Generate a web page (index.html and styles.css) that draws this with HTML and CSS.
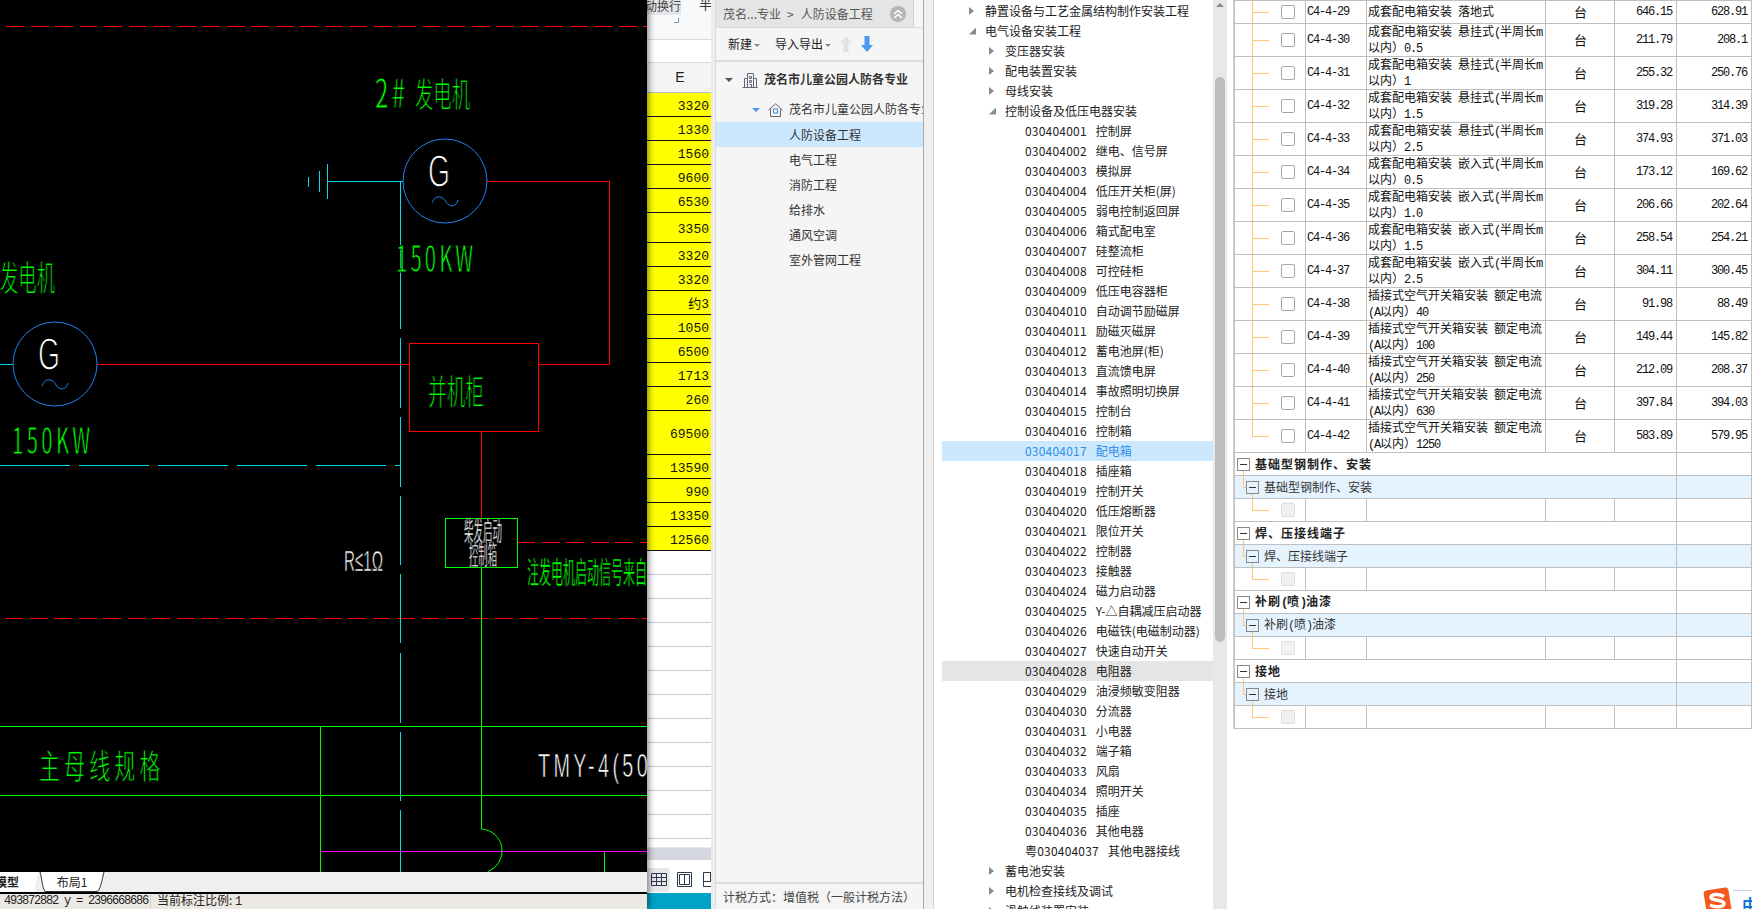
FILE: index.html
```html
<!DOCTYPE html>
<html lang="zh">
<head>
<meta charset="utf-8">
<title>CAD 与计价软件</title>
<link rel="stylesheet" href="styles.css">
</head>
<body>
<div class="screen">

<section class="cad">
<svg class="canvas" width="647" height="872" viewBox="0 0 647 872">
<g fill="none" shape-rendering="crispEdges">
<path class="red dash" d="M6 26.5H647M5 618.5H647M517 542.5H647"/>
<path class="cyan" d="M327 181.5H403M327.5 164V199M319.5 171V192M308.5 177V187M0 364.5H13"/>
<path class="cyan" d="M400.5 181V329M400.5 338V408M400.5 417V487M400.5 496V565M400.5 574V643M400.5 653V723M400.5 732V801M400.5 810V872"/>
<path class="cyan" stroke-dasharray="70 9" d="M0 465.5H400"/>
<path class="red" d="M487 181.5H609.5V364.5H538M97 364.5H410M481.5 431V518"/>
<rect class="red" x="409.5" y="343.5" width="129" height="88"/>
<rect class="green" x="445.5" y="518.5" width="72" height="49"/>
<path class="green" d="M481.5 567V829M0 726.5H647M0 795.5H647M320.5 726V872M604.5 852V872"/>
<path class="magenta" d="M320 851.5H647"/>
</g>
<path class="green" fill="none" d="M481.5 829A22 22 0 0 1 488 871.5"/>
<circle class="blue" cx="445" cy="181" r="42" fill="none"/>
<circle class="blue" cx="55" cy="364" r="42" fill="none"/>
<path class="blue" fill="none" d="M432 203C435 194 443 196 446 202C449 207 456 208 458 200"/>
<path class="blue" fill="none" d="M42 386C45 377 53 379 56 385C59 390 66 391 68 383"/>
<text class="t white" x="428" y="187" font-size="46" textLength="22" lengthAdjust="spacingAndGlyphs">G</text>
<text class="t white" x="38" y="370" font-size="46" textLength="22" lengthAdjust="spacingAndGlyphs">G</text>
<text class="t gr thin" transform="translate(375 108) scale(.6 1)" font-size="40" textLength="50" lengthAdjust="spacing">2#</text>
<text class="t gr" x="415" y="107" font-size="34" textLength="55" lengthAdjust="spacingAndGlyphs">发电机</text>
<text class="t gr thin" transform="translate(396 272) scale(.55 1)" font-size="37" textLength="140" lengthAdjust="spacing">150KW</text>
<text class="t gr thin" transform="translate(12 454) scale(.55 1)" font-size="37" textLength="142" lengthAdjust="spacing">150KW</text>
<text class="t gr" x="0" y="291" font-size="35" textLength="55" lengthAdjust="spacingAndGlyphs">发电机</text>
<text class="t gr" x="428" y="405" font-size="35" textLength="56" lengthAdjust="spacingAndGlyphs">并机柜</text>
<text class="t gr soft" x="527" y="583" font-size="30" textLength="132" lengthAdjust="spacingAndGlyphs">注发电机启动信号来自消</text>
<text class="t gr thin" transform="translate(39 779) scale(.62 1)" font-size="34" textLength="196" lengthAdjust="spacing">主母线规格</text>
<text class="t wh" x="464" y="541" font-size="27" textLength="38" lengthAdjust="spacingAndGlyphs">柴发启动</text>
<text class="t wh" x="469" y="565" font-size="27" textLength="28" lengthAdjust="spacingAndGlyphs">控制箱</text>
<text class="t white bright" x="344" y="571" font-size="30" textLength="39" lengthAdjust="spacingAndGlyphs">R≤1Ω</text>
<text class="t white bright" transform="translate(538 777) scale(.6 1)" font-size="33" textLength="205" lengthAdjust="spacing">TMY-4(50x</text>
</svg>
<div class="cad-tabs">
<div class="tab tab-model"><span>模型</span></div>
<div class="tab tab-layout">
<svg class="tab-edge" width="66" height="20" viewBox="0 0 66 20"><path fill="#fff" stroke="#333" d="M1 0C3 6 3 15 6 19.500H58C61 19 63 8 65 0"/></svg>
<span>布局1</span>
</div>
</div>
<div class="cad-status">
<span class="coord">493872882 y = 2396668686</span>
<span class="scale">当前标注比例: <span class="mono">1</span></span>
</div>
</section>

<section class="sheet">
<div class="ribbon">
<div class="wrapbtn">动换行</div>
<div class="half">半</div>
<i class="corner"></i>
</div>
<div class="fx"></div>
<div class="colhead">E</div>
<div class="cell">3320</div>
<div class="cell">1330</div>
<div class="cell">1560</div>
<div class="cell">9600</div>
<div class="cell">6530</div>
<div class="cell h30">3350</div>
<div class="cell">3320</div>
<div class="cell">3320</div>
<div class="cell">约3</div>
<div class="cell">1050</div>
<div class="cell">6500</div>
<div class="cell">1713</div>
<div class="cell">260</div>
<div class="cell h44">69500</div>
<div class="cell">13590</div>
<div class="cell">990</div>
<div class="cell">13350</div>
<div class="cell">12560</div>
<div class="blank"></div><div class="blank"></div><div class="blank"></div><div class="blank"></div>
<div class="blank"></div><div class="blank"></div><div class="blank"></div><div class="blank"></div>
<div class="blank"></div><div class="blank"></div><div class="blank"></div><div class="blank"></div>
<div class="sheet-fill"></div>
<div class="hscroll"></div>
<div class="views">
<span class="view on"><svg width="16" height="13" viewBox="0 0 16 13"><path fill="none" stroke="#2d3a4a" d="M.5.5h15v12H.5zM.5 4.500h15M.5 8.500h15M5.500.5v12M10.500.5v12"/></svg></span>
<span class="view"><svg width="15" height="15" viewBox="0 0 15 15"><path fill="none" stroke="#2d3a4a" d="M.5.5h14v14H.5zM2.500 2.500h10v10h-10zM7.500 2.500v10"/></svg></span>
<span class="view last"><svg width="15" height="15" viewBox="0 0 15 15"><path fill="none" stroke="#2d3a4a" d="M.5.5h14v14H.5zM.5 9.500h14M7.500.5v9"/></svg></span>
</div>
<div class="teal"></div>
</section>

<div class="seam"></div>

<section class="panel">
<div class="crumb">
<div class="crumb-bar">
<span class="c1">茂名...专业</span><span class="c2">&gt;</span><span class="c3">人防设备工程</span>
<svg class="collapse" width="16" height="16" viewBox="0 0 16 16"><circle cx="8" cy="8" r="8" fill="#b5b5b5"/><path fill="none" stroke="#fff" stroke-width="1.6" d="M4 8l4-3.500 4 3.500M4 12l4-3.500 4 3.500"/></svg>
</div>
</div>
<div class="tools">
<span class="tool t-new">新建<i class="caret"></i></span>
<span class="tool t-io">导入导出<i class="caret"></i></span>
<svg class="arrow" width="12" height="16" viewBox="0 0 12 16"><path fill="#e2e2e2" d="M6 0l6 7H8.500v9h-5V7H0z"/></svg>
<svg class="arrow" width="12" height="16" viewBox="0 0 12 16"><path fill="#4a98f0" d="M6 16l6-7H8.500V0h-5v9H0z"/></svg>
</div>
<div class="ptree">
<div class="proot">
<i class="down dark"></i>
<svg class="ic" width="16" height="16" viewBox="0 0 16 16"><path fill="none" stroke="#667" d="M.5 15.500h15M2.500 15.500V6.500h3M5.500 15.500V1.500h6v14M11.500 6.500h3v9M7.500 4.500h2v2h-2zM7.500 8.500h2v2h-2zM7.500 12.500h2v3"/></svg>
<b>茂名市儿童公园人防各专业</b>
</div>
<div class="pchild">
<i class="down blue-tri"></i>
<svg class="ic" width="15" height="14" viewBox="0 0 15 14"><path fill="none" stroke="#667" d="M.5 7L7.500.8 14.500 7M2.500 6v7.500h10V6"/><rect x="5.500" y="6" width="4" height="4" fill="none" stroke="#3f8fe8"/></svg>
<span>茂名市儿童公园人防各专业</span>
</div>
<div class="pitem sel">人防设备工程</div>
<div class="pitem">电气工程</div>
<div class="pitem">消防工程</div>
<div class="pitem">给排水</div>
<div class="pitem">通风空调</div>
<div class="pitem">室外管网工程</div>
</div>
<div class="pfoot">计税方式：增值税（一般计税方法）</div>
</section>

<div class="seam2"></div>

<section class="tree">
<div class="tlist">
<div class="r l1"><i class="tr"></i>静置设备与工艺金属结构制作安装工程</div>
<div class="r l1"><i class="to"></i>电气设备安装工程</div>
<div class="r l2"><i class="tr"></i>变压器安装</div>
<div class="r l2"><i class="tr"></i>配电装置安装</div>
<div class="r l2"><i class="tr"></i>母线安装</div>
<div class="r l2"><i class="to"></i>控制设备及低压电器安装</div>
<div class="r l3"><span class="code">030404001</span>控制屏</div>
<div class="r l3"><span class="code">030404002</span>继电、信号屏</div>
<div class="r l3"><span class="code">030404003</span>模拟屏</div>
<div class="r l3"><span class="code">030404004</span>低压开关柜(屏)</div>
<div class="r l3"><span class="code">030404005</span>弱电控制返回屏</div>
<div class="r l3"><span class="code">030404006</span>箱式配电室</div>
<div class="r l3"><span class="code">030404007</span>硅整流柜</div>
<div class="r l3"><span class="code">030404008</span>可控硅柜</div>
<div class="r l3"><span class="code">030404009</span>低压电容器柜</div>
<div class="r l3"><span class="code">030404010</span>自动调节励磁屏</div>
<div class="r l3"><span class="code">030404011</span>励磁灭磁屏</div>
<div class="r l3"><span class="code">030404012</span>蓄电池屏(柜)</div>
<div class="r l3"><span class="code">030404013</span>直流馈电屏</div>
<div class="r l3"><span class="code">030404014</span>事故照明切换屏</div>
<div class="r l3"><span class="code">030404015</span>控制台</div>
<div class="r l3"><span class="code">030404016</span>控制箱</div>
<div class="r l3 active"><span class="code">030404017</span>配电箱</div>
<div class="r l3"><span class="code">030404018</span>插座箱</div>
<div class="r l3"><span class="code">030404019</span>控制开关</div>
<div class="r l3"><span class="code">030404020</span>低压熔断器</div>
<div class="r l3"><span class="code">030404021</span>限位开关</div>
<div class="r l3"><span class="code">030404022</span>控制器</div>
<div class="r l3"><span class="code">030404023</span>接触器</div>
<div class="r l3"><span class="code">030404024</span>磁力启动器</div>
<div class="r l3"><span class="code">030404025</span>Y-△自耦减压启动器</div>
<div class="r l3"><span class="code">030404026</span>电磁铁(电磁制动器)</div>
<div class="r l3"><span class="code">030404027</span>快速自动开关</div>
<div class="r l3 hover"><span class="code">030404028</span>电阻器</div>
<div class="r l3"><span class="code">030404029</span>油浸频敏变阻器</div>
<div class="r l3"><span class="code">030404030</span>分流器</div>
<div class="r l3"><span class="code">030404031</span>小电器</div>
<div class="r l3"><span class="code">030404032</span>端子箱</div>
<div class="r l3"><span class="code">030404033</span>风扇</div>
<div class="r l3"><span class="code">030404034</span>照明开关</div>
<div class="r l3"><span class="code">030404035</span>插座</div>
<div class="r l3"><span class="code">030404036</span>其他电器</div>
<div class="r l3"><span class="code">粤030404037</span>其他电器接线</div>
<div class="r l2"><i class="tr"></i>蓄电池安装</div>
<div class="r l2"><i class="tr"></i>电机检查接线及调试</div>
<div class="r l2"><i class="tr"></i>滑触线装置安装</div>
</div>
<div class="vscroll"><i class="up"></i><div class="thumb"></div></div>
</section>

<section class="quota">
<table class="qt">
<colgroup><col class="c-a"><col class="c-b"><col class="c-c"><col class="c-d"><col class="c-e"><col class="c-f"></colgroup>
<tr class="first"><td class="tc line"><i class="cb"></i></td><td class="m">C4-4-29</td><td>成套配电箱安装<span class="m"> </span>落地式</td><td class="u">台</td><td class="m n">646.15</td><td class="m n">628.91</td></tr>
<tr><td class="tc line"><i class="cb"></i></td><td class="m">C4-4-30</td><td>成套配电箱安装<span class="m"> </span>悬挂式<span class="m">(</span>半周长<span class="m">m</span><br>以内）<span class="m">0.5</span></td><td class="u">台</td><td class="m n">211.79</td><td class="m n">208.1</td></tr>
<tr><td class="tc line"><i class="cb"></i></td><td class="m">C4-4-31</td><td>成套配电箱安装<span class="m"> </span>悬挂式<span class="m">(</span>半周长<span class="m">m</span><br>以内）<span class="m">1</span></td><td class="u">台</td><td class="m n">255.32</td><td class="m n">250.76</td></tr>
<tr><td class="tc line"><i class="cb"></i></td><td class="m">C4-4-32</td><td>成套配电箱安装<span class="m"> </span>悬挂式<span class="m">(</span>半周长<span class="m">m</span><br>以内）<span class="m">1.5</span></td><td class="u">台</td><td class="m n">319.28</td><td class="m n">314.39</td></tr>
<tr><td class="tc line"><i class="cb"></i></td><td class="m">C4-4-33</td><td>成套配电箱安装<span class="m"> </span>悬挂式<span class="m">(</span>半周长<span class="m">m</span><br>以内）<span class="m">2.5</span></td><td class="u">台</td><td class="m n">374.93</td><td class="m n">371.03</td></tr>
<tr><td class="tc line"><i class="cb"></i></td><td class="m">C4-4-34</td><td>成套配电箱安装<span class="m"> </span>嵌入式<span class="m">(</span>半周长<span class="m">m</span><br>以内）<span class="m">0.5</span></td><td class="u">台</td><td class="m n">173.12</td><td class="m n">169.62</td></tr>
<tr><td class="tc line"><i class="cb"></i></td><td class="m">C4-4-35</td><td>成套配电箱安装<span class="m"> </span>嵌入式<span class="m">(</span>半周长<span class="m">m</span><br>以内）<span class="m">1.0</span></td><td class="u">台</td><td class="m n">206.66</td><td class="m n">202.64</td></tr>
<tr><td class="tc line"><i class="cb"></i></td><td class="m">C4-4-36</td><td>成套配电箱安装<span class="m"> </span>嵌入式<span class="m">(</span>半周长<span class="m">m</span><br>以内）<span class="m">1.5</span></td><td class="u">台</td><td class="m n">258.54</td><td class="m n">254.21</td></tr>
<tr><td class="tc line"><i class="cb"></i></td><td class="m">C4-4-37</td><td>成套配电箱安装<span class="m"> </span>嵌入式<span class="m">(</span>半周长<span class="m">m</span><br>以内）<span class="m">2.5</span></td><td class="u">台</td><td class="m n">304.11</td><td class="m n">300.45</td></tr>
<tr><td class="tc line"><i class="cb"></i></td><td class="m">C4-4-38</td><td>插接式空气开关箱安装<span class="m"> </span>额定电流<br><span class="m">(A</span>以内）<span class="m">40</span></td><td class="u">台</td><td class="m n">91.98</td><td class="m n">88.49</td></tr>
<tr><td class="tc line"><i class="cb"></i></td><td class="m">C4-4-39</td><td>插接式空气开关箱安装<span class="m"> </span>额定电流<br><span class="m">(A</span>以内）<span class="m">100</span></td><td class="u">台</td><td class="m n">149.44</td><td class="m n">145.82</td></tr>
<tr><td class="tc line"><i class="cb"></i></td><td class="m">C4-4-40</td><td>插接式空气开关箱安装<span class="m"> </span>额定电流<br><span class="m">(A</span>以内）<span class="m">250</span></td><td class="u">台</td><td class="m n">212.09</td><td class="m n">208.37</td></tr>
<tr><td class="tc line"><i class="cb"></i></td><td class="m">C4-4-41</td><td>插接式空气开关箱安装<span class="m"> </span>额定电流<br><span class="m">(A</span>以内）<span class="m">630</span></td><td class="u">台</td><td class="m n">397.84</td><td class="m n">394.03</td></tr>
<tr><td class="tc ell"><i class="cb"></i></td><td class="m">C4-4-42</td><td>插接式空气开关箱安装<span class="m"> </span>额定电流<br><span class="m">(A</span>以内）<span class="m">1250</span></td><td class="u">台</td><td class="m n">583.89</td><td class="m n">579.95</td></tr>

<tr class="sec"><td colspan="5"><div class="s1"><i class="minus"></i><b>基础型钢制作、安装</b></div></td><td></td></tr>
<tr class="sec sub"><td colspan="5"><div class="s2"><i class="minus"></i><span>基础型钢制作、安装</span></div></td><td></td></tr>
<tr class="sec"><td class="tc ell"><i class="cb off"></i></td><td></td><td></td><td></td><td></td><td></td></tr>

<tr class="sec"><td colspan="5"><div class="s1"><i class="minus"></i><b>焊、压接线端子</b></div></td><td></td></tr>
<tr class="sec sub"><td colspan="5"><div class="s2"><i class="minus"></i><span>焊、压接线端子</span></div></td><td></td></tr>
<tr class="sec"><td class="tc ell"><i class="cb off"></i></td><td></td><td></td><td></td><td></td><td></td></tr>

<tr class="sec"><td colspan="5"><div class="s1"><i class="minus"></i><b>补刷<span class="m">(</span>喷<span class="m">)</span>油漆</b></div></td><td></td></tr>
<tr class="sec sub"><td colspan="5"><div class="s2"><i class="minus"></i><span>补刷<span class="m">(</span>喷<span class="m">)</span>油漆</span></div></td><td></td></tr>
<tr class="sec"><td class="tc ell"><i class="cb off"></i></td><td></td><td></td><td></td><td></td><td></td></tr>

<tr class="sec"><td colspan="5"><div class="s1"><i class="minus"></i><b>接地</b></div></td><td></td></tr>
<tr class="sec sub"><td colspan="5"><div class="s2"><i class="minus"></i><span>接地</span></div></td><td></td></tr>
<tr class="sec"><td class="tc ell"><i class="cb off"></i></td><td></td><td></td><td></td><td></td><td></td></tr>
</table>
<div class="ime">
<svg width="30" height="24" viewBox="0 0 30 24"><rect x="2" y="2" width="25" height="26" rx="3" transform="rotate(-9 14 14)" fill="#f4581f"/><path fill="none" stroke="#fff" stroke-width="3.500" d="M21 9.500C16 6.500 8 7 8 10.500C8 14 20 12 21 16.500C21.500 20 13 21 7 18"/></svg>
<div class="ime-bar"><span class="zh">中</span></div>
</div>
</section>

</div>
</body>
</html>
```
FILE: styles.css
```css
* { box-sizing: border-box; }
html, body { margin: 0; height: 100%; background: #fff; }
body { overflow: hidden; font: 12px/1.2 "Noto Sans CJK SC", sans-serif; color: #222; }
i { display: block; }
.screen { display: flex; width: 1752px; height: 909px; overflow: hidden; }
.screen > * { min-width: 0; }

/* CAD window */
.cad { position: relative; z-index: 2; flex: 0 0 647px; display: flex; flex-direction: column; background: #000; box-shadow: 2px 0 6px rgba(0,0,0,.45); }
.canvas { display: block; flex: 0 0 872px; }
.red { stroke: #f00; }
.dash { stroke-dasharray: 18 6.500; }
.cyan { stroke: #00dcee; }
.green { stroke: #0f0; }
.magenta { stroke: #f0f; }
.blue { stroke: #1a82f0; }
.t { font-family: "Noto Sans CJK SC", sans-serif; stroke: #000; stroke-width: 1.1px; paint-order: fill stroke; }
.gr { fill: #0f0; }
.thin { stroke-width: .9px; }
.soft { stroke-width: .5px; }
.white { fill: #fff; font-family: "Liberation Sans", sans-serif; stroke-width: 1.4px; }
.bright { stroke-width: .7px; }
.wh { fill: #fff; stroke-width: .5px; }
.cad-tabs { flex: 0 0 20px; display: flex; background: #efefef; }
.tab { display: flex; align-items: center; font-size: 12px; color: #222; }
.tab-model { width: 38px; background: #fff; clip-path: polygon(0 0, 100% 0, 90% 100%, 0 100%); font-weight: 700; }
.tab-model span { margin-left: -5px; }
.tab-layout { position: relative; width: 66px; margin-left: 1px; justify-content: center; }
.tab-edge { position: absolute; left: 0; top: 0; }
.tab-layout span { position: relative; }
.cad-status { flex: 1; display: flex; align-items: center; gap: 6px; border-top: 2px solid #000; background: #ece9e4; font-size: 12px; color: #222; white-space: nowrap; overflow: hidden; padding-left: 4px; }
.coord { font-family: "Liberation Mono", monospace; letter-spacing: -1.200px; width: 147px; border-right: 1px solid #cfcfcf; }
.mono { font-family: "Liberation Mono", monospace; }

/* spreadsheet strip */
.sheet { flex: 0 0 64px; display: flex; flex-direction: column; background: #fff; overflow: hidden; }
.ribbon { position: relative; flex: 0 0 40px; background: #f8f9fa; border-bottom: 1px solid #d8dadf; }
.wrapbtn { width: 34px; height: 15px; background: #e3e6ea; border-radius: 0 0 2px 0; font-size: 12px; line-height: 12px; text-indent: -2px; color: #444; overflow: hidden; white-space: nowrap; }
.half { position: absolute; left: 52px; top: -4px; font-size: 13px; color: #333; }
.corner { position: absolute; left: 27px; top: 18px; width: 5px; height: 5px; border: solid #8b97a8; border-width: 0 1px 1px 0; }
.fx { flex: 0 0 23px; border-bottom: 1px solid #d8dadf; }
.colhead { flex: 0 0 30px; background: #f3f4f6; border-bottom: 1px solid #b7bdd0; text-align: center; font: 14px/29px "Liberation Sans", sans-serif; color: #222; padding-left: 2px; }
.cell { flex: 0 0 24px; display: flex; align-items: center; justify-content: flex-end; padding: 3px 2px 0 0; background: #ff0; border-bottom: 1px solid #111; font: 13px/1 "Liberation Mono", "Noto Sans CJK SC", monospace; color: #111; }
.h30 { flex-basis: 30px; }
.h44 { flex-basis: 44px; }
.blank { flex: 0 0 24px; border-bottom: 1px solid #c6cbdc; }
.sheet-fill { flex: 0 0 9px; border-bottom: 1px solid #e8e9ee; }
.hscroll { flex: 0 0 12px; background: #d5d7de; }
.views { flex: 0 0 33px; display: flex; align-items: center; background: #fff; padding-top: 6px; }
.view { flex: none; display: flex; align-items: center; justify-content: center; height: 24px; margin-left: 7px; }
.view.on { width: 23px; margin-left: 0; padding-left: 4px; justify-content: flex-start; background: #e6e8eb; border-radius: 0 3px 3px 0; }
.view.last { margin-left: 11px; }
.teal { flex: 1; background: #00a2c6; }
.seam { flex: 0 0 4px; background: #ececec; }

/* project tree panel */
.panel { flex: 0 0 209px; display: flex; flex-direction: column; overflow: hidden; background: #f5f5f5; border-left: 1px solid #ddd; border-right: 1px solid #aaa; color: #333; }
.crumb { flex: 0 0 28px; padding-right: 9px; border-bottom: 1px solid #d9d9d9; }
.crumb-bar { display: flex; align-items: center; height: 27px; padding: 2px 0 0 7px; background: #e5e5e5; border-right: 1px solid #d5d5d5; color: #555; white-space: nowrap; }
.c2 { margin: 0 7px 0 6px; }
.collapse { margin: -2px 0 0 17px; }
.tools { flex: 0 0 34px; display: flex; align-items: center; border-bottom: 2px solid #ddd; white-space: nowrap; color: #222; }
.tool { display: flex; align-items: center; }
.t-new { margin-left: 12px; }
.t-io { margin-left: 15px; }
.caret { width: 0; margin: 3px 0 0 2px; border: 3px solid transparent; border-top: 3px solid #888; border-bottom: 0; }
.arrow { margin-left: 9px; }
.ptree { flex: 1; overflow: hidden; white-space: nowrap; }
.down { flex: none; width: 0; border: 4px solid transparent; border-bottom: 0; }
.dark { border-top: 4px solid #555; }
.blue-tri { border-top: 4px solid #4a98f0; }
.ic { flex: none; }
.proot { display: flex; align-items: center; height: 35px; padding-left: 9px; }
.proot .ic { margin: 0 6px 0 9px; }
.proot b { color: #333; }
.pchild { display: flex; align-items: center; height: 25px; padding-left: 36px; }
.pchild .ic { margin: 0 6px 0 8px; }
.pchild span { flex: none; }
.pitem { height: 25px; line-height: 25px; padding-left: 73px; }
.pitem.sel { background: #cce8ff; }
.pfoot { flex: 0 0 27px; line-height: 25px; padding-left: 7px; border-top: 2px solid #ddd; color: #444; white-space: nowrap; }
.seam2 { flex: 0 0 10px; background: #f0f0f0; border-right: 1px solid #d5d5d5; }

/* quota chapter tree */
.tree { flex: 0 0 293px; display: flex; background: #fff; overflow: hidden; }
.tlist { flex: 0 0 279px; padding-top: 1px; white-space: nowrap; color: #222; }
.r { display: flex; align-items: center; height: 20px; margin-left: 8px; }
.l1 { padding-left: 27px; }
.l2 { padding-left: 47px; }
.l3 { padding-left: 83px; }
.tr { flex: 0 0 16px; height: 8px; }
.tr::before { content: ""; display: block; width: 0; border: 4px solid transparent; border-left: 5px solid #8a8a8a; border-right: 0; }
.to { flex: 0 0 16px; height: 7px; }
.to::before { content: ""; display: block; width: 7px; height: 7px; background: #8a8a8a; clip-path: polygon(100% 0, 100% 100%, 0 100%); }
.code { margin-right: 9px; letter-spacing: .2px; }
.active { background: #cce8ff; color: #2f8fe8; }
.hover { background: #e5e5e5; }
.vscroll { position: relative; flex: 0 0 14px; background: #e8e8e8; }
.up { position: absolute; left: 3px; top: 3px; width: 0; border: 4px solid transparent; border-top: 0; border-bottom: 4px solid #8c8c8c; }
.thumb { width: 10px; height: 565px; margin: 77px 0 0 2px; border-radius: 5px; background: #bdbdbd; }

/* quota table */
.quota { position: relative; flex: 0 0 525px; padding-left: 7px; }
.qt { display: table; table-layout: fixed; width: 518px; border-collapse: collapse; box-shadow: -1px 0 0 #cfcfcf; color: #111; }
.c-a { width: 71px; } .c-b { width: 61px; } .c-c { width: 179px; } .c-d { width: 69px; } .c-e { width: 62px; } .c-f { width: 75px; }
.qt td { height: 33px; padding: 0 0 0 1px; border: 1px solid #bfbfbf; line-height: 14px; white-space: nowrap; overflow: hidden; vertical-align: middle; }
.qt .first td, .qt .sec td { height: 23px; }
.m { font-family: "Liberation Mono", monospace; letter-spacing: -1.200px; }
.u { text-align: center; font-size: 13px; }
.qt td.n { text-align: right; padding: 0 4px 0 0; }
.qt td.tc { position: relative; padding: 0 0 0 46px; }
.cb { width: 14px; height: 14px; border: 1px solid #a6a6a6; border-radius: 2px; background: #fff; }
.cb.off { background: #f1f1f1; border-color: #ddd; }
.tc::before { content: ""; position: absolute; left: 17px; top: 0; bottom: 0; width: 1px; background: #ffc77a; }
.tc::after { content: ""; position: absolute; left: 17px; top: 50%; width: 17px; height: 1px; background: #ffc77a; }
.tc.ell::before { bottom: 50%; }
.sub td { background: #e5f3ff; }
.qt .sec td { padding: 0; }
.qt .sec td.tc { padding-left: 46px; }
.s1, .s2 { position: relative; display: flex; align-items: center; gap: 5px; height: 22px; }
.s1 { padding-left: 2px; }
.s1 b { letter-spacing: 1px; color: #222; }
.s2 { padding-left: 11px; color: #333; }
.minus { position: relative; z-index: 1; flex: 0 0 13px; height: 13px; background: #fff; border: 1px solid #888; }
.sub .minus { background: #e5f3ff; }
.minus::before { content: ""; position: absolute; left: 2px; right: 2px; top: 5px; height: 1px; background: #333; }
.s1::after { content: ""; position: absolute; left: 8px; top: 17px; height: 6px; width: 1px; background: #ffc77a; }
.s2::before { content: ""; position: absolute; left: 8px; top: 0; width: 4px; height: 11px; border: solid #ffc77a; border-width: 0 0 1px 1px; }
.s2::after { content: ""; position: absolute; left: 17px; top: 17px; height: 6px; width: 1px; background: #ffc77a; }
.ime { position: absolute; right: 0; bottom: 0; width: 49px; height: 22px; display: flex; overflow: hidden; }
.ime svg { flex: 0 0 30px; }
.ime-bar { flex: 1; margin-top: 3px; padding: 5px 0 0 9px; border-top: 1px solid #bcd8f0; }
.zh { display: block; font-size: 16px; line-height: 16px; font-weight: 700; color: #1477d8; white-space: nowrap; }
```
